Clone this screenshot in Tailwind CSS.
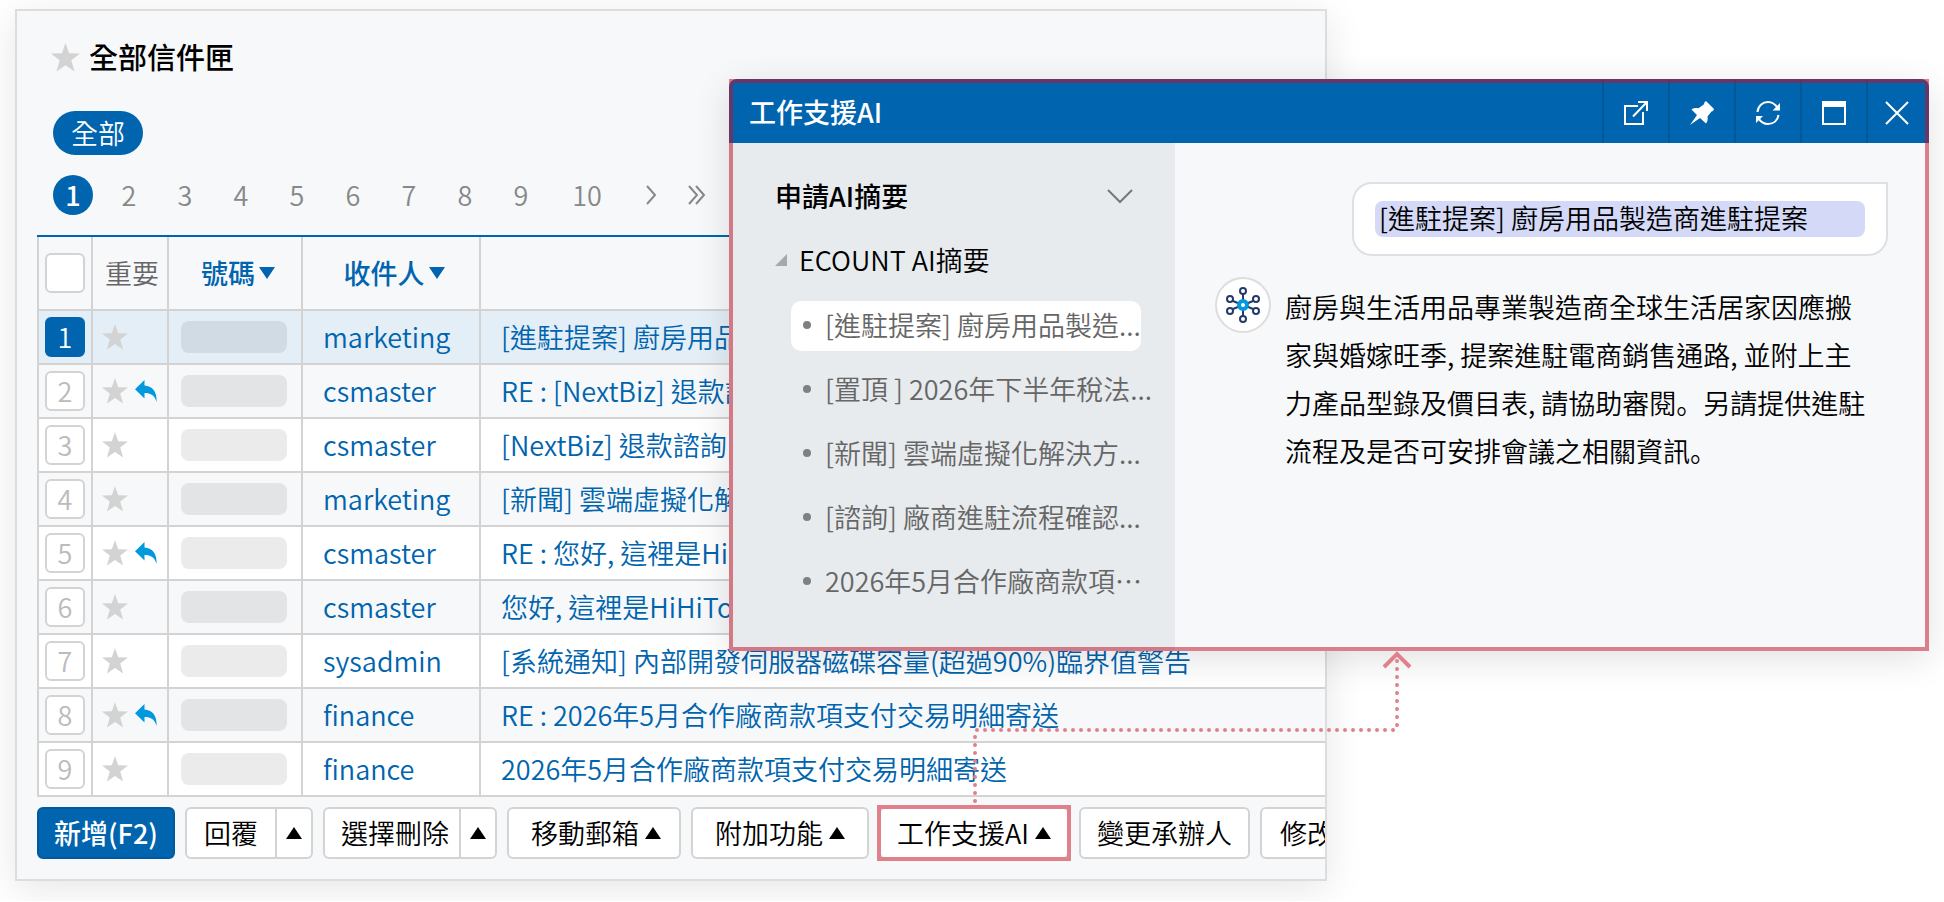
<!DOCTYPE html>
<html lang="zh-Hant">
<head>
    <meta charset="UTF-8">
    <meta name="viewport" content="width=device-width, initial-scale=1.0">
    <title>全部信件匣</title>
    <script src="https://cdn.jsdelivr.net/npm/@tailwindcss/browser@4"></script>
</head>
<body class="relative bg-white pt-[9px] pb-5 font-['Noto_Sans_CJK_TC','Noto_Sans',sans-serif] font-[350] text-[27px] leading-10 text-black overflow-x-hidden">

    <svg class="hidden">
        <symbol id="star" viewBox="0 0 26 26"><path d="M13 0l3.2 9.3 9.8.2-7.800 5.900 2.900 10.100L13 20l-8.100 5.500 2.900-10.100L0 9.500l9.800-.2z" fill="currentColor"/></symbol>
        <symbol id="reply" viewBox="0 0 22 22"><path d="M9.500 0v5.500C17 6 22 11 21.600 22c-2-6.500-5.500-9-12.100-9v5.500L0 9.300z" fill="currentColor"/></symbol>
        <symbol id="up" viewBox="0 0 16 12"><path d="M8 0l8 12H0z" fill="currentColor"/></symbol>
        <symbol id="down" viewBox="0 0 16 12"><path d="M8 12L0 0h16z" fill="currentColor"/></symbol>
    </svg>

    <!-- Mailbox -->
    <main class="ml-[15px] mr-[617px] border-2 border-[#dddddd] bg-[#f7f8fa] pt-6 pb-5 shadow-[0_8px_36px_rgba(0,0,0,0.1)] overflow-hidden">
        <h1 class="flex items-center h-11 gap-[9px] pl-[34px] font-medium text-[29px]">
            <svg class="size-[29px] text-[#d3d3d3]"><use href="#star"/></svg><span class="pb-0.5">全部信件匣</span>
        </h1>

        <div class="mt-8 pl-9 flex">
            <button class="h-11 w-[90px] rounded-full bg-[#0064ae] text-white">全部</button>
        </div>

        <nav class="mt-5 pl-7 flex items-center h-10 text-[#888888]">
            <a href="#" class="w-14 flex justify-center"><span class="size-10 rounded-full bg-[#0064ae] text-white text-center font-medium">1</span></a>
            <a href="#" class="w-14 text-center">2</a>
            <a href="#" class="w-14 text-center">3</a>
            <a href="#" class="w-14 text-center">4</a>
            <a href="#" class="w-14 text-center">5</a>
            <a href="#" class="w-14 text-center">6</a>
            <a href="#" class="w-14 text-center">7</a>
            <a href="#" class="w-14 text-center">8</a>
            <a href="#" class="w-14 text-center">9</a>
            <a href="#" class="w-[76px] text-center">10</a>
            <a href="#" aria-label="下一頁" class="w-[52px] flex justify-center">
                <svg class="w-3 h-5" viewBox="0 0 12 20" fill="none" stroke="currentColor" stroke-width="2"><path d="M2 1l8 9-8 9"/></svg>
            </a>
            <a href="#" aria-label="最後一頁" class="w-10 flex justify-center">
                <svg class="w-[18px] h-5" viewBox="0 0 18 20" fill="none" stroke="currentColor" stroke-width="2"><path d="M1 1l8 9-8 9M8 1l8 9-8 9"/></svg>
            </a>
        </nav>

        <div class="mt-5 pl-5">
            <table class="w-full table-fixed border-separate border-spacing-0 border-t-2 border-[#0064ae] text-left">
                <thead>
                    <tr class="h-[74px] *:border-b-2 *:border-r-2 *:border-[#d3d3d3] *:p-0">
                        <th class="w-14 border-l-2"><input type="checkbox" aria-label="全選" class="appearance-none block mx-auto size-10 rounded-md border-2 border-[#d3d3d3] bg-white"></th>
                        <th class="w-[76px] font-[350] text-center text-[#666666]"><span class="pl-1">重要</span></th>
                        <th class="w-[134px] text-[#0064ae] font-medium"><div class="flex items-center justify-center gap-1 pl-1.5">號碼<svg class="w-4 h-3"><use href="#down"/></svg></div></th>
                        <th class="w-[178px] text-[#0064ae] font-medium"><div class="flex items-center justify-center gap-1 pl-1.5">收件人<svg class="w-4 h-3"><use href="#down"/></svg></div></th>
                        <th class="border-r-0!"></th>
                    </tr>
                </thead>
                <tbody id="mailBody"></tbody>
            </table>
        </div>

        <div class="mt-2.5 pl-5 flex gap-2.5 h-[52px] *:shrink-0">
            <button class="rounded-md border-2 border-[#005a9d] bg-[#0064ae] px-[15px] font-medium text-white">新增(F2)</button>
            <div class="flex rounded-md border-2 border-[#d3d3d3] bg-white">
                <button class="px-[17px] border-r-2 border-[#d3d3d3]">回覆</button>
                <button aria-label="回覆選項" class="w-[34px] flex items-center justify-center"><svg class="w-4 h-3"><use href="#up"/></svg></button>
            </div>
            <div class="flex rounded-md border-2 border-[#d3d3d3] bg-white">
                <button class="pl-4 pr-2.5 border-r-2 border-[#d3d3d3]">選擇刪除</button>
                <button aria-label="刪除選項" class="w-[34px] flex items-center justify-center"><svg class="w-4 h-3"><use href="#up"/></svg></button>
            </div>
            <button class="flex items-center gap-1.5 rounded-md border-2 border-[#d3d3d3] bg-white pl-[22px] pr-[18px]">移動郵箱<svg class="w-4 h-3"><use href="#up"/></svg></button>
            <button class="flex items-center gap-1.5 rounded-md border-2 border-[#d3d3d3] bg-white pl-[22px] pr-[22px]">附加功能<svg class="w-4 h-3"><use href="#up"/></svg></button>
            <div class="flex outline-4 -outline-offset-2 outline-[#e0808a]">
                <button class="flex items-center gap-1.5 rounded-md border-2 border-[#d3d3d3] bg-white px-4">工作支援AI<svg class="w-4 h-3"><use href="#up"/></svg></button>
            </div>
            <button class="rounded-md border-2 border-[#d3d3d3] bg-white px-4">變更承辦人</button>
            <button class="rounded-md border-2 border-[#d3d3d3] bg-white px-[18px]">修改</button>
        </div>
    </main>

    <!-- Assistant window -->
    <section class="absolute left-[729px] right-[15px] top-[79px] h-[572px] flex flex-col rounded-t-lg bg-[#f7f8fa] shadow-[0_8px_36px_rgba(0,0,0,0.12)]">
        <header class="flex h-16 shrink-0 items-center rounded-t-lg bg-[#0064ae] pl-5 text-white">
            <h2 class="grow pt-0.5 font-medium">工作支援AI</h2>
            <div class="flex h-full *:flex *:w-[66px] *:items-center *:justify-center *:border-l-2 *:border-[#005896] *:pt-1">
                <button aria-label="開新視窗"><svg class="size-6" viewBox="0 0 24 24" fill="none" stroke="currentColor" stroke-width="2"><path d="M14 5H1v18h18V11M14 1h9v9M22.500 1.500L9 15.500"/></svg></button>
                <button aria-label="釘選"><svg class="size-6" viewBox="0 0 24 24" fill="currentColor"><path d="M16 0l8 8-1 2-1.500.5-4 5c.5 2.500.2 5-1.500 7l-6-5.500L0 24l7-10-5.500-5.500c2-1.500 4.500-1.700 7-1.300l5.500-4 .5-2z"/></svg></button>
                <button aria-label="重新整理"><svg class="size-6" viewBox="0 0 24 24" fill="none" stroke="currentColor" stroke-width="2"><path d="M1.500 11C2 5 6.500 1 12 1c4 0 7.500 2.500 9.500 6M22.500 14c-.8 5.500-5 9-10.500 9-4 0-7.500-2-9.500-6"/><path d="M24 2v7.500h-7.500zM0 22v-7h7z" fill="currentColor" stroke="none"/></svg></button>
                <button aria-label="最大化"><svg class="size-6" viewBox="0 0 24 24" fill="none" stroke="currentColor" stroke-width="2"><path d="M1 1h22v22H1z"/><path d="M1 1h22v5H1z" fill="currentColor" stroke="none"/></svg></button>
                <button aria-label="關閉" class="w-[63px]! pr-1"><svg class="size-6" viewBox="0 0 24 24" fill="none" stroke="currentColor" stroke-width="2"><path d="M1 1l22 22M23 1L1 23"/></svg></button>
            </div>
        </header>

        <div class="flex grow">
            <aside class="w-[446px] shrink-0 bg-[#e7ebee] pt-[33px] pl-[46px]">
                <button class="flex w-full items-center justify-between pr-[42px] font-medium">
                    申請AI摘要
                    <svg class="w-[26px] h-[15px] text-[#777777]" viewBox="0 0 26 15" fill="none" stroke="currentColor" stroke-width="2"><path d="M1 1l12 12L25 1"/></svg>
                </button>
                <div class="mt-6 flex items-center gap-3">
                    <svg class="size-3 text-[#a8a8a8]" viewBox="0 0 12 12"><path d="M12 0v12H0z" fill="currentColor"/></svg>
                    ECOUNT AI摘要
                </div>
                <ul class="mt-[21px] ml-4 mr-[18px] flex flex-col gap-3.5 text-[#666666] whitespace-nowrap *:flex *:h-[50px] *:items-center *:gap-3.5 *:pl-3 *:pb-0.5">
                    <li class="w-[350px] rounded-[10px] bg-white"><span class="size-2 shrink-0 rounded-full bg-[#808080]"></span><a href="#">[進駐提案] 廚房用品製造...</a></li>
                    <li><span class="size-2 shrink-0 rounded-full bg-[#808080]"></span><a href="#">[置頂 ] 2026年下半年稅法...</a></li>
                    <li><span class="size-2 shrink-0 rounded-full bg-[#808080]"></span><a href="#">[新聞] 雲端虛擬化解決方...</a></li>
                    <li><span class="size-2 shrink-0 rounded-full bg-[#808080]"></span><a href="#">[諮詢] 廠商進駐流程確認...</a></li>
                    <li><span class="size-2 shrink-0 rounded-full bg-[#808080]"></span><a href="#">2026年5月合作廠商款項⋯</a></li>
                </ul>
            </aside>

            <div class="grow pt-[39px] pl-10 pr-[41px]">
                <div class="ml-auto w-[536px] rounded-[20px] rounded-tr-none border-2 border-[#dde1e6] bg-white px-[21px] py-[17px]">
                    <p class="h-9 rounded-lg bg-[#d3d9f7] pl-1 leading-[34px]">[進駐提案] 廚房用品製造商進駐提案</p>
                </div>
                <div class="mt-[21px] flex gap-3.5">
                    <div class="flex size-14 shrink-0 items-center justify-center rounded-full border-2 border-[#dddddd] bg-white">
                        <svg class="size-9" viewBox="0 0 36 36" fill="none" stroke="#243a66" stroke-width="2">
                            <path d="M18 7v7M18 22v7M8 14l6 2.500M28 14l-6 2.500M8 22l6-2.500M28 22l-6-2.500"/>
                            <circle cx="18" cy="4" r="3"/><circle cx="18" cy="32" r="3"/>
                            <circle cx="5" cy="12" r="3"/><circle cx="31" cy="12" r="3"/>
                            <circle cx="5" cy="24" r="3"/><circle cx="31" cy="24" r="3"/>
                            <circle cx="18" cy="18" r="4" stroke="#0099dd" stroke-width="4" fill="#ffffff"/>
                        </svg>
                    </div>
                    <p class="mt-1.5 w-[586px] leading-[48px]">廚房與生活用品專業製造商全球生活居家因應搬家與婚嫁旺季, 提案進駐電商銷售通路, 並附上主力產品型錄及價目表, 請協助審閱<span lang="ja" class="font-['Noto_Sans_CJK_JP',sans-serif]">。</span>另請提供進駐流程及是否可安排會議之相關資訊<span lang="ja" class="font-['Noto_Sans_CJK_JP',sans-serif]">。</span></p>
                </div>
            </div>
        </div>
        <div class="pointer-events-none absolute inset-0 border-4 border-[#c40f27]/52"></div>
    </section>

    <!-- Connector from the button to the window -->
    <svg class="pointer-events-none absolute left-[969px] top-[651px] w-[450px] h-[152px]" viewBox="0 0 450 152" fill="none" stroke="#e0808a" stroke-width="4">
        <path d="M6 150V83M8 79H428M428 74V6" stroke-linecap="round" stroke-dasharray="0 8"/>
        <path d="M415 16L428 3l13 13"/>
    </svg>

    <script>
        const mails = [
            { name: 'marketing', subject: '[進駐提案] 廚房用品製造商進駐提案' },
            { name: 'csmaster', subject: 'RE : [NextBiz] 退款諮詢', reply: true },
            { name: 'csmaster', subject: '[NextBiz] 退款諮詢' },
            { name: 'marketing', subject: '[新聞] 雲端虛擬化解決方案' },
            { name: 'csmaster', subject: 'RE : 您好, 這裡是HiHiTo', reply: true },
            { name: 'csmaster', subject: '您好, 這裡是HiHiTo' },
            { name: 'sysadmin', subject: '[系統通知] 內部開發伺服器磁碟容量(超過90%)臨界值警告' },
            { name: 'finance', subject: 'RE : 2026年5月合作廠商款項支付交易明細寄送', reply: true },
            { name: 'finance', subject: '2026年5月合作廠商款項支付交易明細寄送' }
        ];

        const mailBody = document.getElementById('mailBody');

        mails.forEach((mail, index) => {
            const row = document.createElement('tr');
            const base = 'h-[54px] *:border-b-2 *:border-r-2 *:border-[#d3d3d3] *:p-0 ';
            row.className = base + (index === 0 ? 'bg-[#e3eef7]' : index % 2 ? 'bg-[#f7f8fa]' : 'bg-white');
            const number = index === 0
                ? 'border-[#0064ae] bg-[#0064ae] text-white'
                : 'border-[#d3d3d3] bg-white text-[#bbbbbb]';
            row.innerHTML = `
                <td class="border-l-2"><button class="block mx-auto size-10 rounded-md border-2 leading-9 ${number}">${index + 1}</button></td>
                <td>
                    <div class="flex items-center gap-[7px] pl-[9px]">
                        <svg class="size-[26px] text-[#d3d3d3]"><use href="#star"/></svg>
                        ${mail.reply ? '<svg class="size-[22px] text-[#0099dd]"><use href="#reply"/></svg>' : ''}
                    </div>
                </td>
                <td><div class="ml-3 h-8 w-[106px] rounded-lg bg-black/8"></div></td>
                <td class="text-[#0064ae]"><span class="pl-5">${mail.name}</span></td>
                <td class="border-r-0! whitespace-nowrap text-[#0064ae]"><a href="#" class="pl-5">${mail.subject}</a></td>
            `;
            mailBody.appendChild(row);
        });
    </script>
</body>
</html>
